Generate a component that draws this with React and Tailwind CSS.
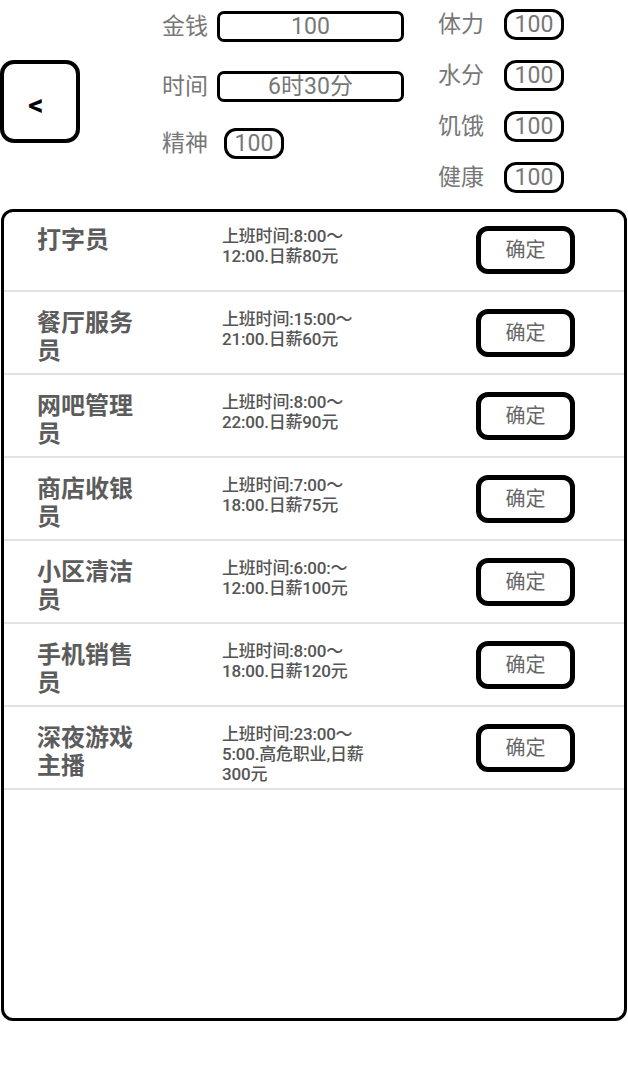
import React from 'react';

const jobs = [
    { name: '打字员', desc: '上班时间:8:00～12:00.日薪80元' },
    { name: '餐厅服务员', desc: '上班时间:15:00～21:00.日薪60元' },
    { name: '网吧管理员', desc: '上班时间:8:00～22:00.日薪90元' },
    { name: '商店收银员', desc: '上班时间:7:00～18:00.日薪75元' },
    { name: '小区清洁员', desc: '上班时间:6:00:～12:00.日薪100元' },
    { name: '手机销售员', desc: '上班时间:8:00～18:00.日薪120元' },
    { name: '深夜游戏主播', desc: '上班时间:23:00～5:00.高危职业,日薪300元' },
];

const stats = [
    { label: '体力', value: 100 },
    { label: '水分', value: 100 },
    { label: '饥饿', value: 100 },
    { label: '健康', value: 100 },
];

const Pill = ({ value, className = '' }) => (
    <div className={`w-[60px] h-[31px] border-[3px] border-black rounded-[12px] flex items-center justify-center text-[23px] text-[#777] leading-none ${className}`}>
        {value}
    </div>
);

const JobRow = ({ job }) => (
    <div className="h-[83px] flex items-center border-b-2 border-[#e2e2e2] pl-[33px] pr-[49px]">
        <div className="self-start mt-[17px] w-[110px] text-[24px] leading-[28px] font-semibold text-[#5c5c5c]">
            {job.name}
        </div>
        <div className="self-start mt-[17px] ml-[75px] w-[162px] text-[17px] leading-[20px] font-medium text-[#555] tracking-[-0.2px]">
            {job.desc}
        </div>
        <button className="ml-auto w-[99px] h-[48px] border-[5px] border-black rounded-[12px] flex items-center justify-center text-[20px] text-[#666]">
            确定
        </button>
    </div>
);

export default function App() {
    return (
        <div className="w-[628px] h-[1080px] bg-white font-[Roboto,'Noto_Sans_CJK_SC',sans-serif]">
            {/* header */}
            <div className="h-[209px] flex items-start">
                <button className="mt-[60px] w-[80px] h-[83px] border-[4px] border-black rounded-[14px] flex items-center justify-center pr-[8px] pt-[6px] text-[30px] font-bold text-black leading-none">
                    &lt;
                </button>

                <div className="ml-[82px] flex flex-col">
                    <div className="mt-[11px] h-[31px] flex items-center">
                        <span className="w-[46px] text-[23px] text-[#777] leading-none">金钱</span>
                        <div className="ml-[9px] w-[187px] h-[31px] border-[3px] border-black rounded-[7px] flex items-center justify-center text-[23px] text-[#777] leading-none">
                            100
                        </div>
                    </div>
                    <div className="mt-[29px] h-[31px] flex items-center">
                        <span className="w-[46px] text-[23px] text-[#777] leading-none">时间</span>
                        <div className="ml-[9px] w-[187px] h-[31px] border-[3px] border-black rounded-[7px] flex items-center justify-center text-[23px] text-[#777] leading-none">
                            6时30分
                        </div>
                    </div>
                    <div className="mt-[26px] h-[31px] flex items-center">
                        <span className="w-[46px] text-[23px] text-[#777] leading-none">精神</span>
                        <Pill value={100} className="ml-[16px]" />
                    </div>
                </div>

                <div className="ml-[34px] mt-[9px] flex flex-col gap-[20px]">
                    {stats.map(s => (
                        <div key={s.label} className="h-[31px] flex items-center">
                            <span className="w-[46px] text-[23px] text-[#777] leading-none">{s.label}</span>
                            <Pill value={s.value} className="ml-[20px]" />
                        </div>
                    ))}
                </div>
            </div>

            {/* job list */}
            <div className="ml-[1px] w-[626px] h-[812px] border-[3px] border-black rounded-[12px] overflow-hidden">
                <div className="-mt-[3px]">
                    {jobs.map(job => <JobRow key={job.name} job={job} />)}
                </div>
            </div>
        </div>
    );
}
